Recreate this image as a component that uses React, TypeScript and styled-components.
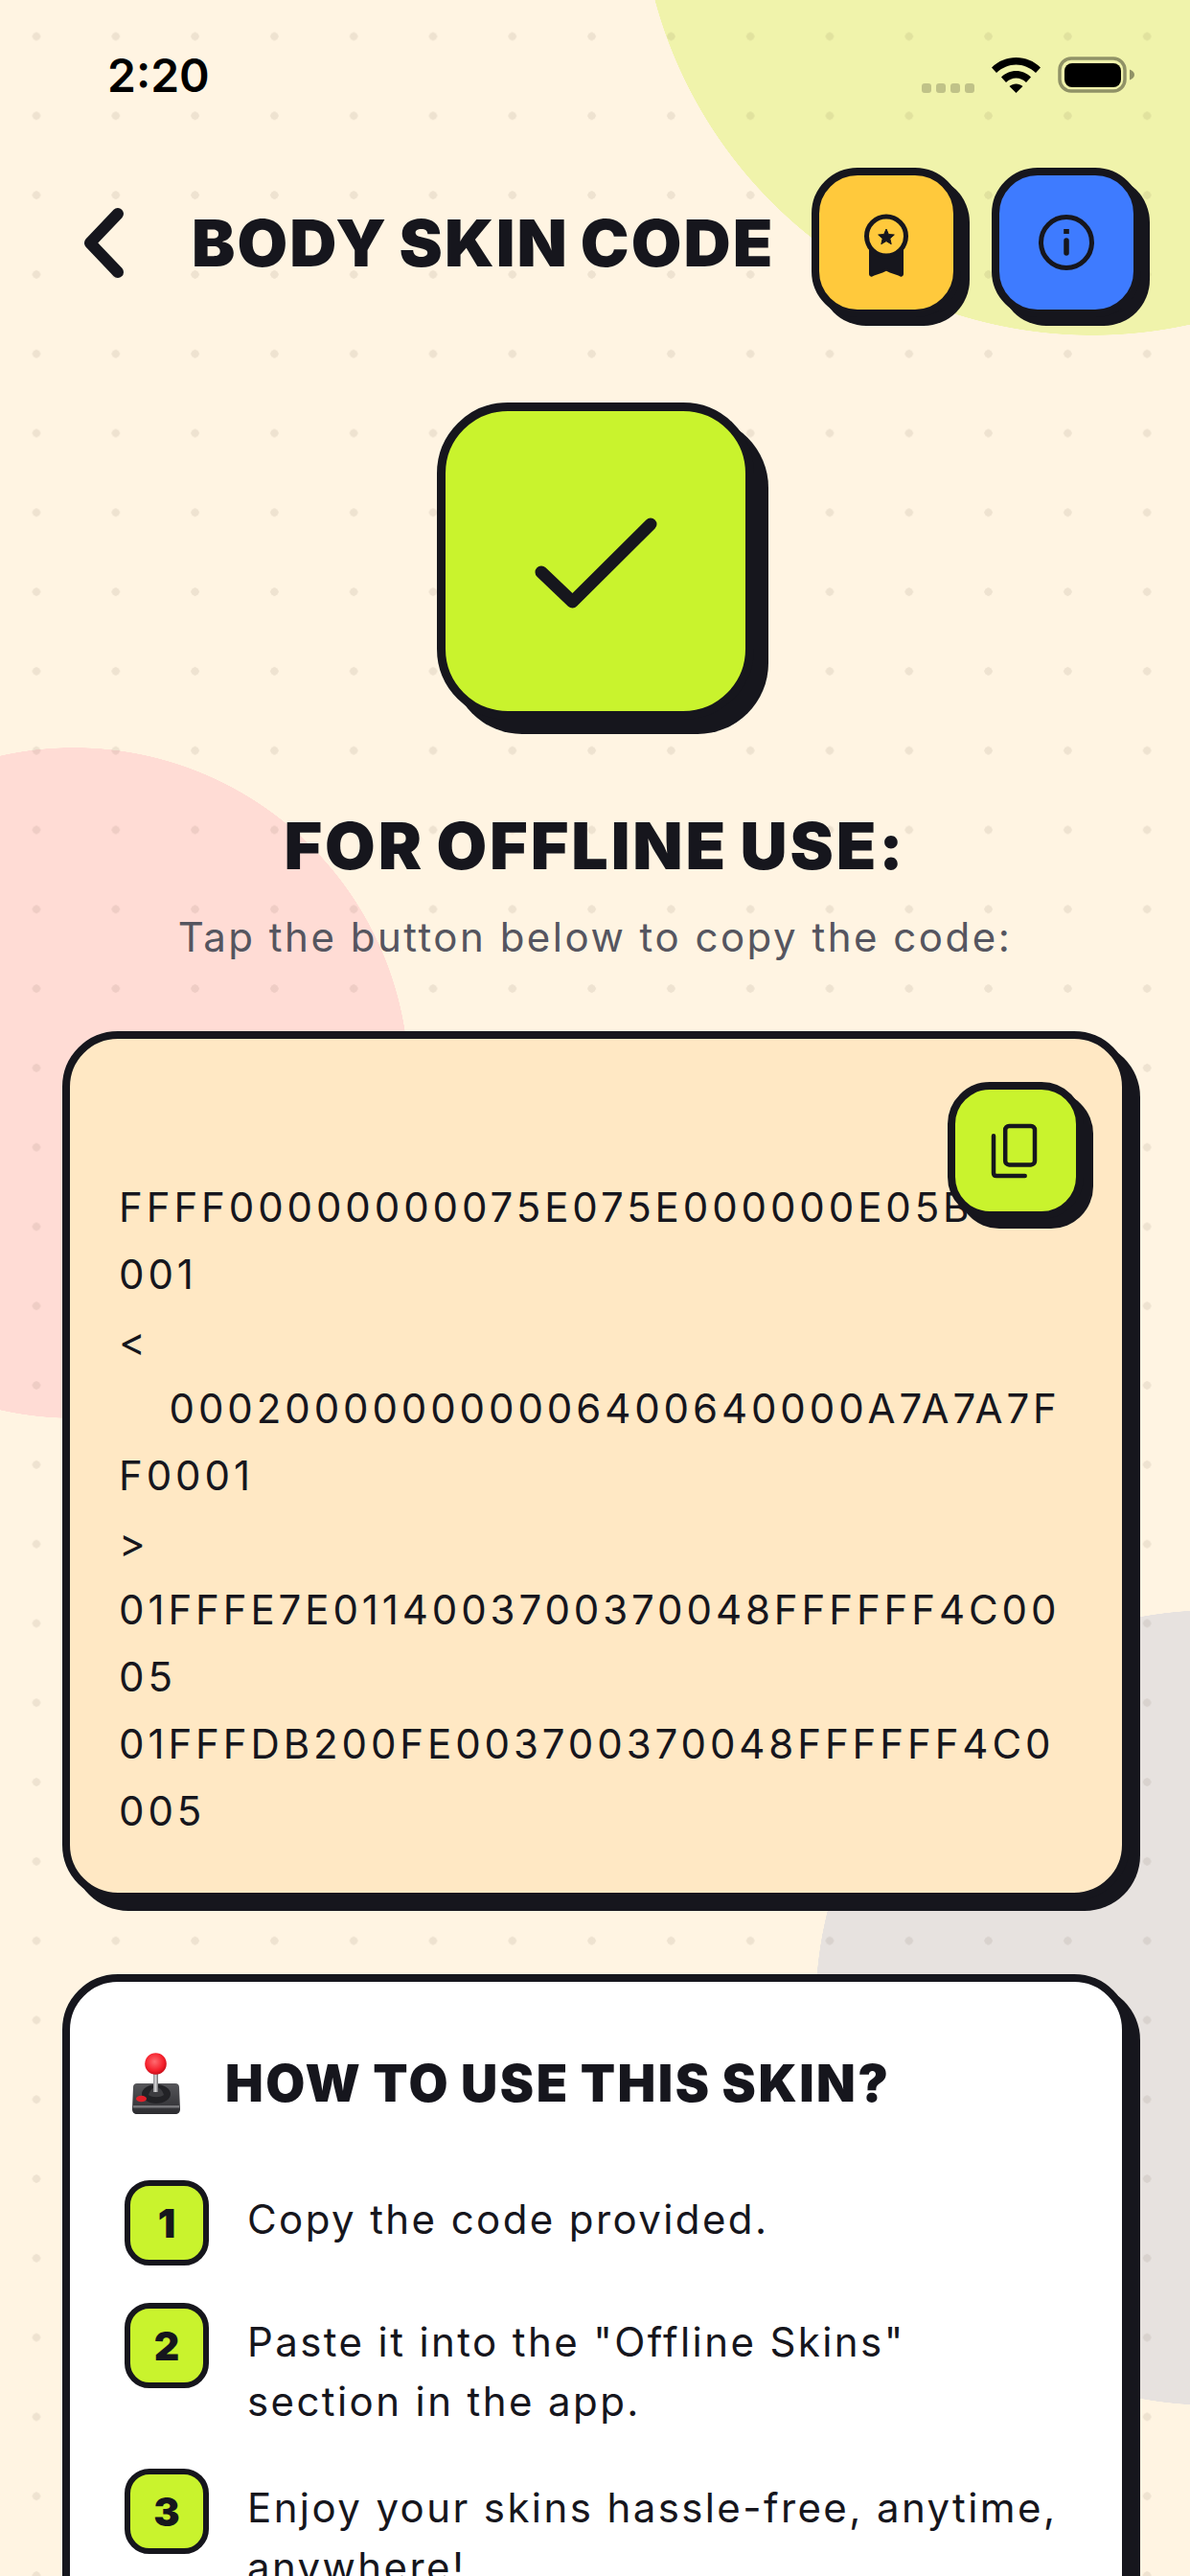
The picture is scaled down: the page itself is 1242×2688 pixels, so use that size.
import React from 'react';
import styled, { createGlobalStyle } from 'styled-components';

const ink = '#16161d';
const lime = '#c9f32d';

const GlobalStyle = createGlobalStyle`
  html, body {
    margin: 0;
    padding: 0;
    background: #fff4e2;
  }
  * {
    box-sizing: border-box;
  }
`;

const Page = styled.div`
  width: 1242px;
  height: 2688px;
  overflow: hidden;
  display: flex;
  flex-direction: column;
  font-family: Inter, 'Liberation Sans', sans-serif;
  color: ${ink};
  background-color: #fff4e2;
  background-image:
    radial-gradient(circle 4.4px at center, rgba(70, 50, 30, 0.09) 90%, transparent 100%),
    radial-gradient(circle 473px at 1140px -123px, #f0f3ab 99.9%, transparent 100%),
    radial-gradient(circle 350px at 77px 1130px, #ffdcd5 99.9%, transparent 100%),
    radial-gradient(circle 415px at 1266px 2095px, #e7e2df 99.9%, transparent 100%);
  background-size: 82.8px 82.8px, auto, auto, auto;
  background-position: -3.4px -3.4px, 0 0, 0 0, 0 0;
  background-repeat: repeat, no-repeat, no-repeat, no-repeat;
`;

const StatusBar = styled.div`
  height: 175px;
  flex: none;
  display: flex;
  justify-content: space-between;
  align-items: flex-start;
  padding: 59px 58px 0 112px;
`;

const Time = styled.div`
  font-size: 48px;
  font-weight: 600;
  line-height: 40px;
  color: #000;
`;

const StatusIcons = styled.div`
  display: flex;
  align-items: flex-end;
  gap: 18px;
  height: 38px;
`;

const SignalDots = styled.div`
  display: flex;
  gap: 5px;
`;

const SignalDot = styled.span`
  width: 10px;
  height: 10px;
  border-radius: 3px;
  background: rgba(0, 0, 0, 0.2);
`;

const Header = styled.header`
  display: flex;
  align-items: center;
  height: 156px;
  flex: none;
  padding: 0 51px 0 87px;
`;

const BackIcon = styled.svg`
  width: 44px;
  height: 75px;
  flex: none;
  margin-right: 69px;
`;

const Title = styled.h1`
  margin: 0;
  font-size: 68px;
  font-weight: 900;
  line-height: 1;
  letter-spacing: 2.1px;
  word-spacing: -4px;
  white-space: nowrap;
`;

const HeaderActions = styled.div`
  margin-left: auto;
  display: flex;
  gap: 32px;
`;

const ActionButton = styled.button<{ $color: string }>`
  width: 156px;
  height: 156px;
  padding: 0;
  display: flex;
  align-items: center;
  justify-content: center;
  background: ${(p) => p.$color};
  border: 8px solid ${ink};
  border-radius: 48px;
  box-shadow: 9px 9px 0 ${ink};
`;

const Hero = styled.div`
  display: flex;
  flex-direction: column;
  align-items: center;
  flex: none;
  margin-top: 89px;
`;

const CheckTile = styled.div`
  width: 331px;
  height: 331px;
  display: flex;
  align-items: center;
  justify-content: center;
  background: ${lime};
  border: 9px solid ${ink};
  border-radius: 74px;
  box-shadow: 15px 15px 0 ${ink};
`;

const Heading = styled.h2`
  margin: 93px 0 0;
  font-size: 68px;
  font-weight: 900;
  line-height: 76px;
  letter-spacing: 2.9px;
  word-spacing: -4px;
  white-space: nowrap;
`;

const Subtitle = styled.p`
  margin: 33px 0 0;
  font-size: 42px;
  line-height: 50px;
  letter-spacing: 2.5px;
  color: #55555f;
  white-space: nowrap;
`;

const Card = styled.section<{ $bg: string }>`
  position: relative;
  flex: none;
  width: 1114px;
  margin-left: 65px;
  background: ${(p) => p.$bg};
  border: 8px solid ${ink};
  border-radius: 58px;
  box-shadow: 11px 11px 0 ${ink};
`;

const CodeCard = styled(Card)`
  margin-top: 73px;
  padding: 141px 40px 50px 51px;
`;

const CodeLine = styled.div`
  font-size: 42px;
  line-height: 70px;
  letter-spacing: 3.9px;
  word-spacing: 1.8px;
  white-space: pre;
`;

const CopyButton = styled.button`
  position: absolute;
  top: 45px;
  right: 40px;
  width: 142px;
  height: 143px;
  padding: 0;
  display: flex;
  align-items: center;
  justify-content: center;
  background: ${lime};
  border: 8px solid ${ink};
  border-radius: 44px;
  box-shadow: 10px 10px 0 ${ink};
`;

const HowToCard = styled(Card)`
  margin-top: 77px;
  padding: 74px 40px 60px 57px;
`;

const HowToHeader = styled.div`
  display: flex;
  align-items: center;
  height: 64px;
  margin-bottom: 69px;
`;

const Joystick = styled.svg`
  width: 50px;
  height: 64px;
  flex: none;
  margin: 0 47px 0 8px;
`;

const HowToTitle = styled.h3`
  margin: 0;
  font-size: 53px;
  font-weight: 900;
  line-height: 1;
  letter-spacing: 2.5px;
  word-spacing: -2px;
  white-space: nowrap;
`;

const Steps = styled.ol`
  list-style: none;
  margin: 0;
  padding: 0;
  display: flex;
  flex-direction: column;
  gap: 39px;
`;

const Step = styled.li`
  display: flex;
  gap: 40px;
`;

const StepBadge = styled.div`
  width: 88px;
  height: 89px;
  flex: none;
  display: flex;
  align-items: center;
  justify-content: center;
  background: ${lime};
  border: 6px solid ${ink};
  border-radius: 26px;
  font-size: 41px;
  font-weight: 900;
`;

const StepText = styled.p`
  margin: 0;
  width: 848px;
  padding-top: 10px;
  font-size: 42px;
  line-height: 62px;
  letter-spacing: 2.4px;
`;

const codeLines = [
  'FFFF00000000075E075E000000E05B',
  '001',
  '<',
  '   000200000000006400640000A7A7A7F',
  'F0001',
  '>',
  '01FFFE7E0114003700370048FFFFFF4C00',
  '05',
  '01FFFDB200FE003700370048FFFFFF4C0',
  '005',
];

const steps = [
  'Copy the code provided.',
  'Paste it into the "Offline Skins" section in the app.',
  'Enjoy your skins hassle-free, anytime, anywhere!',
];

const App: React.FC = () => {
  return (
    <Page>
      <GlobalStyle />
      <StatusBar>
        <Time>2:20</Time>
        <StatusIcons>
          <SignalDots>
            {[0, 1, 2, 3].map((i) => (
              <SignalDot key={i} />
            ))}
          </SignalDots>
          <svg width="51" height="38" viewBox="0 0 51 38" fill="#000">
            <path d="M0 11.5C7 4.5 16 1 25.5 1S44 4.5 51 11.5L46 17C40 11.5 33 8.5 25.5 8.5S11 11.5 5 17Z" />
            <path d="M10 21.5C14 17.5 19.5 15 25.5 15S37 17.5 41 21.5L36 27C33 24 29.5 22.5 25.5 22.5S18 24 15 27Z" />
            <path d="M18.5 31C20.5 29.5 23 28.5 25.5 28.5S30.5 29.5 32.5 31L25.5 38Z" />
          </svg>
          <svg width="80" height="38" viewBox="0 0 80 38">
            <rect x="2" y="2" width="68" height="34" rx="12" fill="none" stroke="rgba(0,0,0,0.4)" strokeWidth="3.5" />
            <rect x="7" y="7" width="59" height="25" rx="8" fill="#000" />
            <path d="M75 13.5C78 14.5 80 16.5 80 19S78 23.5 75 24.5Z" fill="rgba(0,0,0,0.4)" />
          </svg>
        </StatusIcons>
      </StatusBar>

      <Header>
        <BackIcon viewBox="0 0 44 75" fill="none" stroke={ink} strokeWidth="12" strokeLinecap="round" strokeLinejoin="round">
          <path d="M36 7 7 37.5 36 68" />
        </BackIcon>
        <Title>BODY SKIN CODE</Title>
        <HeaderActions>
          <ActionButton $color="#ffc93c">
            <svg width="80" height="80" viewBox="0 0 80 80">
              <path d="M23 44H57V73C57 74 56 75 55 74.5C50 72.5 45 71 40 68.5C35 71 30 72.5 25 74.5C24 75 23 74 23 73Z" fill={ink} stroke={ink} strokeWidth="2" strokeLinejoin="round" />
              <circle cx="40" cy="33.5" r="20.5" fill="#ffc93c" stroke={ink} strokeWidth="5" />
              <path d="M40 26 42.4 31.5 48.3 32 43.8 35.9 45.2 41.7 40 38.6 34.8 41.7 36.2 35.9 31.7 32 37.6 31.5Z" fill={ink} stroke={ink} strokeWidth="1" strokeLinejoin="round" />
            </svg>
          </ActionButton>
          <ActionButton $color="#3e7bff">
            <svg width="80" height="80" viewBox="0 0 80 80" fill="none" stroke={ink} strokeWidth="5">
              <circle cx="40" cy="40" r="26.5" />
              <rect x="37.2" y="26" width="5.6" height="5" fill={ink} stroke="none" />
              <path d="M40 38V51" strokeWidth="5.5" strokeLinecap="round" />
            </svg>
          </ActionButton>
        </HeaderActions>
      </Header>

      <Hero>
        <CheckTile>
          <svg width="160" height="160" viewBox="0 0 160 160" fill="none" stroke={ink} strokeWidth="13" strokeLinecap="round" strokeLinejoin="round">
            <path d="M24 91 56.5 122 138 41" />
          </svg>
        </CheckTile>
        <Heading>FOR OFFLINE USE:</Heading>
        <Subtitle>Tap the button below to copy the code:</Subtitle>
      </Hero>

      <CodeCard $bg="#ffe8c4">
        {codeLines.map((line, index) => (
          <CodeLine key={index}>{line}</CodeLine>
        ))}
        <CopyButton>
          <svg width="80" height="80" viewBox="0 0 80 80" fill="none" stroke={ink} strokeWidth="4.5" strokeLinecap="round" strokeLinejoin="round">
            <rect x="29.2" y="14" width="30.8" height="40.4" rx="4" />
            <path d="M17 24.3V63C17 65 18 66 20 66H49.7" />
          </svg>
        </CopyButton>
      </CodeCard>

      <HowToCard $bg="#fff">
        <HowToHeader>
          <Joystick viewBox="0 0 50 64">
            <defs>
              <radialGradient id="ball" cx="0.45" cy="0.4" r="0.6">
                <stop offset="0" stopColor="#ff6b70" />
                <stop offset="0.7" stopColor="#f5202c" />
                <stop offset="1" stopColor="#c9101c" />
              </radialGradient>
              <linearGradient id="base" x1="0" y1="0" x2="0" y2="1">
                <stop offset="0" stopColor="#56565a" />
                <stop offset="1" stopColor="#2c2c30" />
              </linearGradient>
              <linearGradient id="stick" x1="0" y1="0" x2="1" y2="0">
                <stop offset="0" stopColor="#8e8e92" />
                <stop offset="0.5" stopColor="#d4d4d6" />
                <stop offset="1" stopColor="#6a6a6e" />
              </linearGradient>
            </defs>
            <path d="M5 32H45C47.5 32 49 33.5 49 36L50 59C50 62 48 64 45 64H5C2 64 0 62 0 59L1 36C1 33.5 2.5 32 5 32Z" fill="url(#base)" />
            <rect x="1" y="55" width="48" height="2.5" fill="#77777b" />
            <ellipse cx="25" cy="43" rx="15" ry="10" fill="#222226" />
            <path d="M17 44C19 38 22 36 25 36S31 38 33 44C29 47 21 47 17 44Z" fill="#3c3c40" />
            <rect x="22" y="20" width="5" height="21" fill="url(#stick)" />
            <circle cx="24.5" cy="11.5" r="11.3" fill="url(#ball)" />
            <ellipse cx="9.5" cy="48" rx="5.5" ry="3.2" fill="#e2202a" />
          </Joystick>
          <HowToTitle>HOW TO USE THIS SKIN?</HowToTitle>
        </HowToHeader>
        <Steps>
          {steps.map((text, index) => (
            <Step key={index}>
              <StepBadge>{index + 1}</StepBadge>
              <StepText>{text}</StepText>
            </Step>
          ))}
        </Steps>
      </HowToCard>
    </Page>
  );
};

export default App;
